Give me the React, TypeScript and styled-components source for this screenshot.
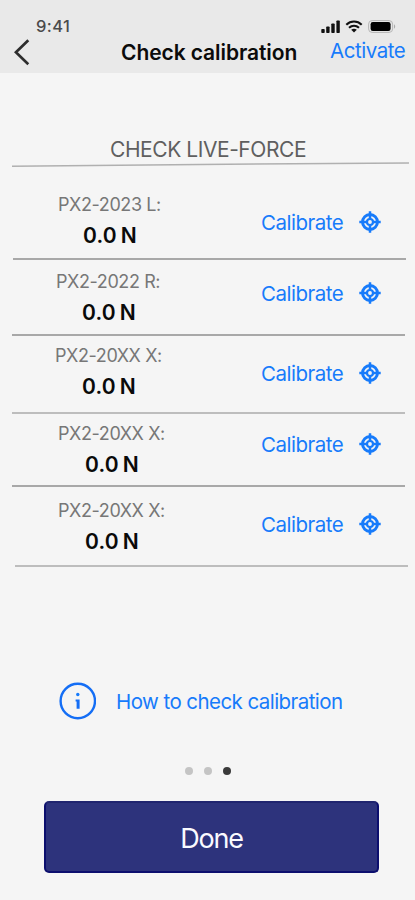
import React from 'react';
import styled, { createGlobalStyle } from 'styled-components';

const GlobalStyle = createGlobalStyle`
  * { box-sizing: border-box; }
  html, body { margin: 0; padding: 0; background: #f5f5f5; }
  body { font-family: Inter, 'Liberation Sans', sans-serif; overflow: hidden; }
  button { border: 0; padding: 0; margin: 0; background: none; font: inherit; color: inherit; }
`;

const blue = '#177bfb';

const Screen = styled.main`
  width: 415px;
  height: 900px;
  display: flex;
  flex-direction: column;
  background: #f5f5f5;
  overflow: hidden;
`;

const Header = styled.header`
  height: 73px;
  flex: none;
  background: #e9e9e9;
`;

const StatusBar = styled.div`
  height: 36px;
  padding: 16px 19px 0 36px;
  display: flex;
  justify-content: space-between;
`;

const Clock = styled.span`
  font-size: 16.5px;
  line-height: 20px;
  font-weight: 500;
  letter-spacing: 0.4px;
  color: #4b4b4b;
`;

const StatusIcons = styled.div`
  display: flex;
  align-items: center;
  height: 20px;
  gap: 5px;
`;

const NavBar = styled.div`
  height: 37px;
  display: grid;
  grid-template-columns: 121px 1fr 85px;
  align-items: start;
`;

const BackButton = styled.button`
  width: 16px;
  height: 28px;
  margin: 2px 0 0 14px;
  display: flex;
`;

const Title = styled.h1`
  margin: 4px 0 0;
  font-size: 21px;
  line-height: 26px;
  font-weight: 600;
  letter-spacing: -0.08px;
  white-space: nowrap;
  color: #0b0b0b;
`;

const Activate = styled.button`
  margin-top: 2px;
  text-align: left;
  font-size: 20.5px;
  line-height: 26px;
  letter-spacing: -0.45px;
  color: ${blue};
`;

const Section = styled.section`
  height: 95px;
  flex: none;
  display: flex;
  flex-direction: column;
  justify-content: flex-end;
`;

const SectionTitle = styled.h2`
  margin: 0 0 -1px 110px;
  font-size: 21px;
  line-height: 26px;
  font-weight: 400;
  letter-spacing: -0.44px;
  white-space: nowrap;
  color: #5f5f5f;
`;

const SectionRule = styled.svg`
  display: block;
  flex: none;
  width: 415px;
  height: 6px;
`;

const List = styled.ul`
  list-style: none;
  margin: 0;
  padding: 0;
  flex: none;
`;

const Row = styled.li<{ $height: number; $indent: number; $soft?: boolean }>`
  height: ${(p) => p.$height}px;
  width: 393px;
  margin-left: ${(p) => p.$indent}px;
  display: flex;
  align-items: flex-start;
  border-bottom: ${(p) => (p.$soft ? '2px solid #bdbdbd' : '2px solid #a8a8a8')};
`;

const Reading = styled.div<{ $top: number; $left: number; $width: number }>`
  flex: none;
  width: ${(p) => p.$width}px;
  margin-left: ${(p) => p.$left}px;
  padding-top: ${(p) => p.$top}px;
`;

const Sensor = styled.div`
  font-size: 18px;
  line-height: 24px;
  letter-spacing: -0.4px;
  white-space: nowrap;
  color: #777;
`;

const Force = styled.div<{ $left: number }>`
  margin: 5px 0 0 ${(p) => p.$left}px;
  font-size: 21px;
  line-height: 28px;
  font-weight: 600;
  letter-spacing: 0.15px;
  word-spacing: -1.3px;
  white-space: nowrap;
  color: #0a0a0a;
`;

const Calibrate = styled.button<{ $top: number }>`
  flex: none;
  margin-top: ${(p) => p.$top}px;
  display: flex;
  align-items: center;
  justify-content: space-between;
  width: 120px;
  height: 26px;
  font-size: 20.5px;
  line-height: 26px;
  letter-spacing: -0.5px;
  color: ${blue};
  svg { flex: none; margin-bottom: 2px; }
`;

const Help = styled.button`
  height: 40px;
  margin: 114px 0 0 58px;
  flex: none;
  display: flex;
  align-items: center;
  gap: 20px;
  font-size: 20.5px;
  letter-spacing: -0.56px;
  white-space: nowrap;
  color: ${blue};
`;

const Dots = styled.div`
  flex: none;
  margin: 46px 0 0 185px;
  display: flex;
  gap: 11px;
`;

const Dot = styled.span<{ $active?: boolean }>`
  width: 8px;
  height: 8px;
  border-radius: 50%;
  background: ${(p) => (p.$active ? '#3a3a3a' : '#c4c4c4')};
`;

const DoneButton = styled.button`
  flex: none;
  width: 335px;
  height: 72px;
  margin: 26px 0 0 44px;
  padding-top: 2px;
  border: 2px solid #0c0f6e;
  border-top-color: #20256f;
  border-radius: 5px;
  background: #2d337c;
  color: #fafaff;
  font-size: 27px;
  letter-spacing: -1.2px;
`;

const SignalIcon = () => (
  <svg width="20" height="13" viewBox="0 0 20 13" fill="#111">
    <rect x="1.3" y="9" width="3.4" height="4" rx="0.8" />
    <rect x="6.2" y="6.5" width="3.4" height="6.5" rx="0.8" />
    <rect x="11.3" y="3.5" width="3.4" height="9.5" rx="0.8" />
    <rect x="16.4" y="0.5" width="3.4" height="12.5" rx="0.8" />
  </svg>
);

const WifiIcon = () => (
  <svg width="18" height="13" viewBox="0 0 18 13" fill="none" stroke="#111" strokeWidth="2.1">
    <path d="M1.3 4.7C5.7.5 12.3.5 16.7 4.7" />
    <path d="M4 7.8c3-2.7 7-2.7 10 0" />
    <path d="M6.2 9.8c1.7-1.4 3.9-1.4 5.6 0L9 12.6z" fill="#111" stroke="none" />
  </svg>
);

const BatteryIcon = () => (
  <svg width="28" height="13" viewBox="0 0 28 13">
    <rect x="0.6" y="0.6" width="24" height="11.8" rx="3.5" fill="none" stroke="#b5b5b5" />
    <rect x="2.6" y="2.1" width="20" height="8.9" rx="2.2" fill="#000" />
    <path d="M26 4.3c1.6.7 1.6 3.7 0 4.4z" fill="#aaa" />
  </svg>
);

const ChevronIcon = () => (
  <svg width="16" height="28" viewBox="0 0 16 28" fill="none" stroke="#2d2d2d" strokeWidth="2.7">
    <path d="M14.3 2.2L1.9 14.3l12.4 12" />
  </svg>
);

const TargetIcon = () => (
  <svg width="22" height="22" viewBox="0 0 22 22" fill="none" stroke={blue}>
    <circle cx="11" cy="11" r="7.5" strokeWidth="2.9" />
    <circle cx="11" cy="11" r="3" strokeWidth="2.2" />
    <path d="M11 0.3v8M11 13.7v8M0.3 11h8M13.7 11h8" strokeWidth="2.5" />
  </svg>
);

const InfoIcon = () => (
  <svg width="38" height="38" viewBox="0 0 38 38">
    <circle cx="19.8" cy="19" r="17.2" fill="none" stroke="#146ef5" strokeWidth="2.4" />
    <circle cx="19.8" cy="12.5" r="1.7" fill={blue} />
    <path d="M17.6 17.6h4v9.2h-3v-7.2h-1z" fill="#146ef5" />
  </svg>
);

type Reader = {
  name: string;
  height: number;
  indent: number;
  top: number;
  left: number;
  forceLeft: number;
  action: number;
  soft?: boolean;
};

const readers: Reader[] = [
  { name: 'PX2-2023 L:', height: 92, indent: 13, top: 25, left: 58, forceLeft: 25, action: 42 },
  { name: 'PX2-2022 R:', height: 76, indent: 12, top: 10, left: 56, forceLeft: 26, action: 21 },
  { name: 'PX2-20XX X:', height: 78, indent: 12, top: 8, left: 55, forceLeft: 27, action: 25, soft: true },
  { name: 'PX2-20XX X:', height: 73, indent: 12, top: 8, left: 58, forceLeft: 27, action: 18 },
  { name: 'PX2-20XX X:', height: 80, indent: 15, top: 12, left: 58, forceLeft: 27, action: 25, soft: true },
];

export default function App() {
  return (
    <Screen>
      <GlobalStyle />
      <Header>
        <StatusBar>
          <Clock>9:41</Clock>
          <StatusIcons>
            <SignalIcon />
            <WifiIcon />
            <BatteryIcon />
          </StatusIcons>
        </StatusBar>
        <NavBar>
          <BackButton aria-label="Back"><ChevronIcon /></BackButton>
          <Title>Check calibration</Title>
          <Activate>Activate</Activate>
        </NavBar>
      </Header>
      <Section>
        <SectionTitle>CHECK LIVE-FORCE</SectionTitle>
        <SectionRule viewBox="0 0 415 6">
          <path d="M12 4.3L200 2.5L409 1" fill="none" stroke="#b0b0b0" strokeWidth="1.5" />
        </SectionRule>
      </Section>
      <List>
        {readers.map((r, i) => (
          <Row key={i} $height={r.height} $indent={r.indent} $soft={r.soft}>
            <Reading $top={r.top} $left={r.left - r.indent} $width={261 - r.left}>
              <Sensor>{r.name}</Sensor>
              <Force $left={r.forceLeft}>0.0 N</Force>
            </Reading>
            <Calibrate $top={r.action}>
              Calibrate
              <TargetIcon />
            </Calibrate>
          </Row>
        ))}
      </List>
      <Help>
        <InfoIcon />
        How to check calibration
      </Help>
      <Dots>
        <Dot />
        <Dot />
        <Dot $active />
      </Dots>
      <DoneButton>Done</DoneButton>
    </Screen>
  );
}
